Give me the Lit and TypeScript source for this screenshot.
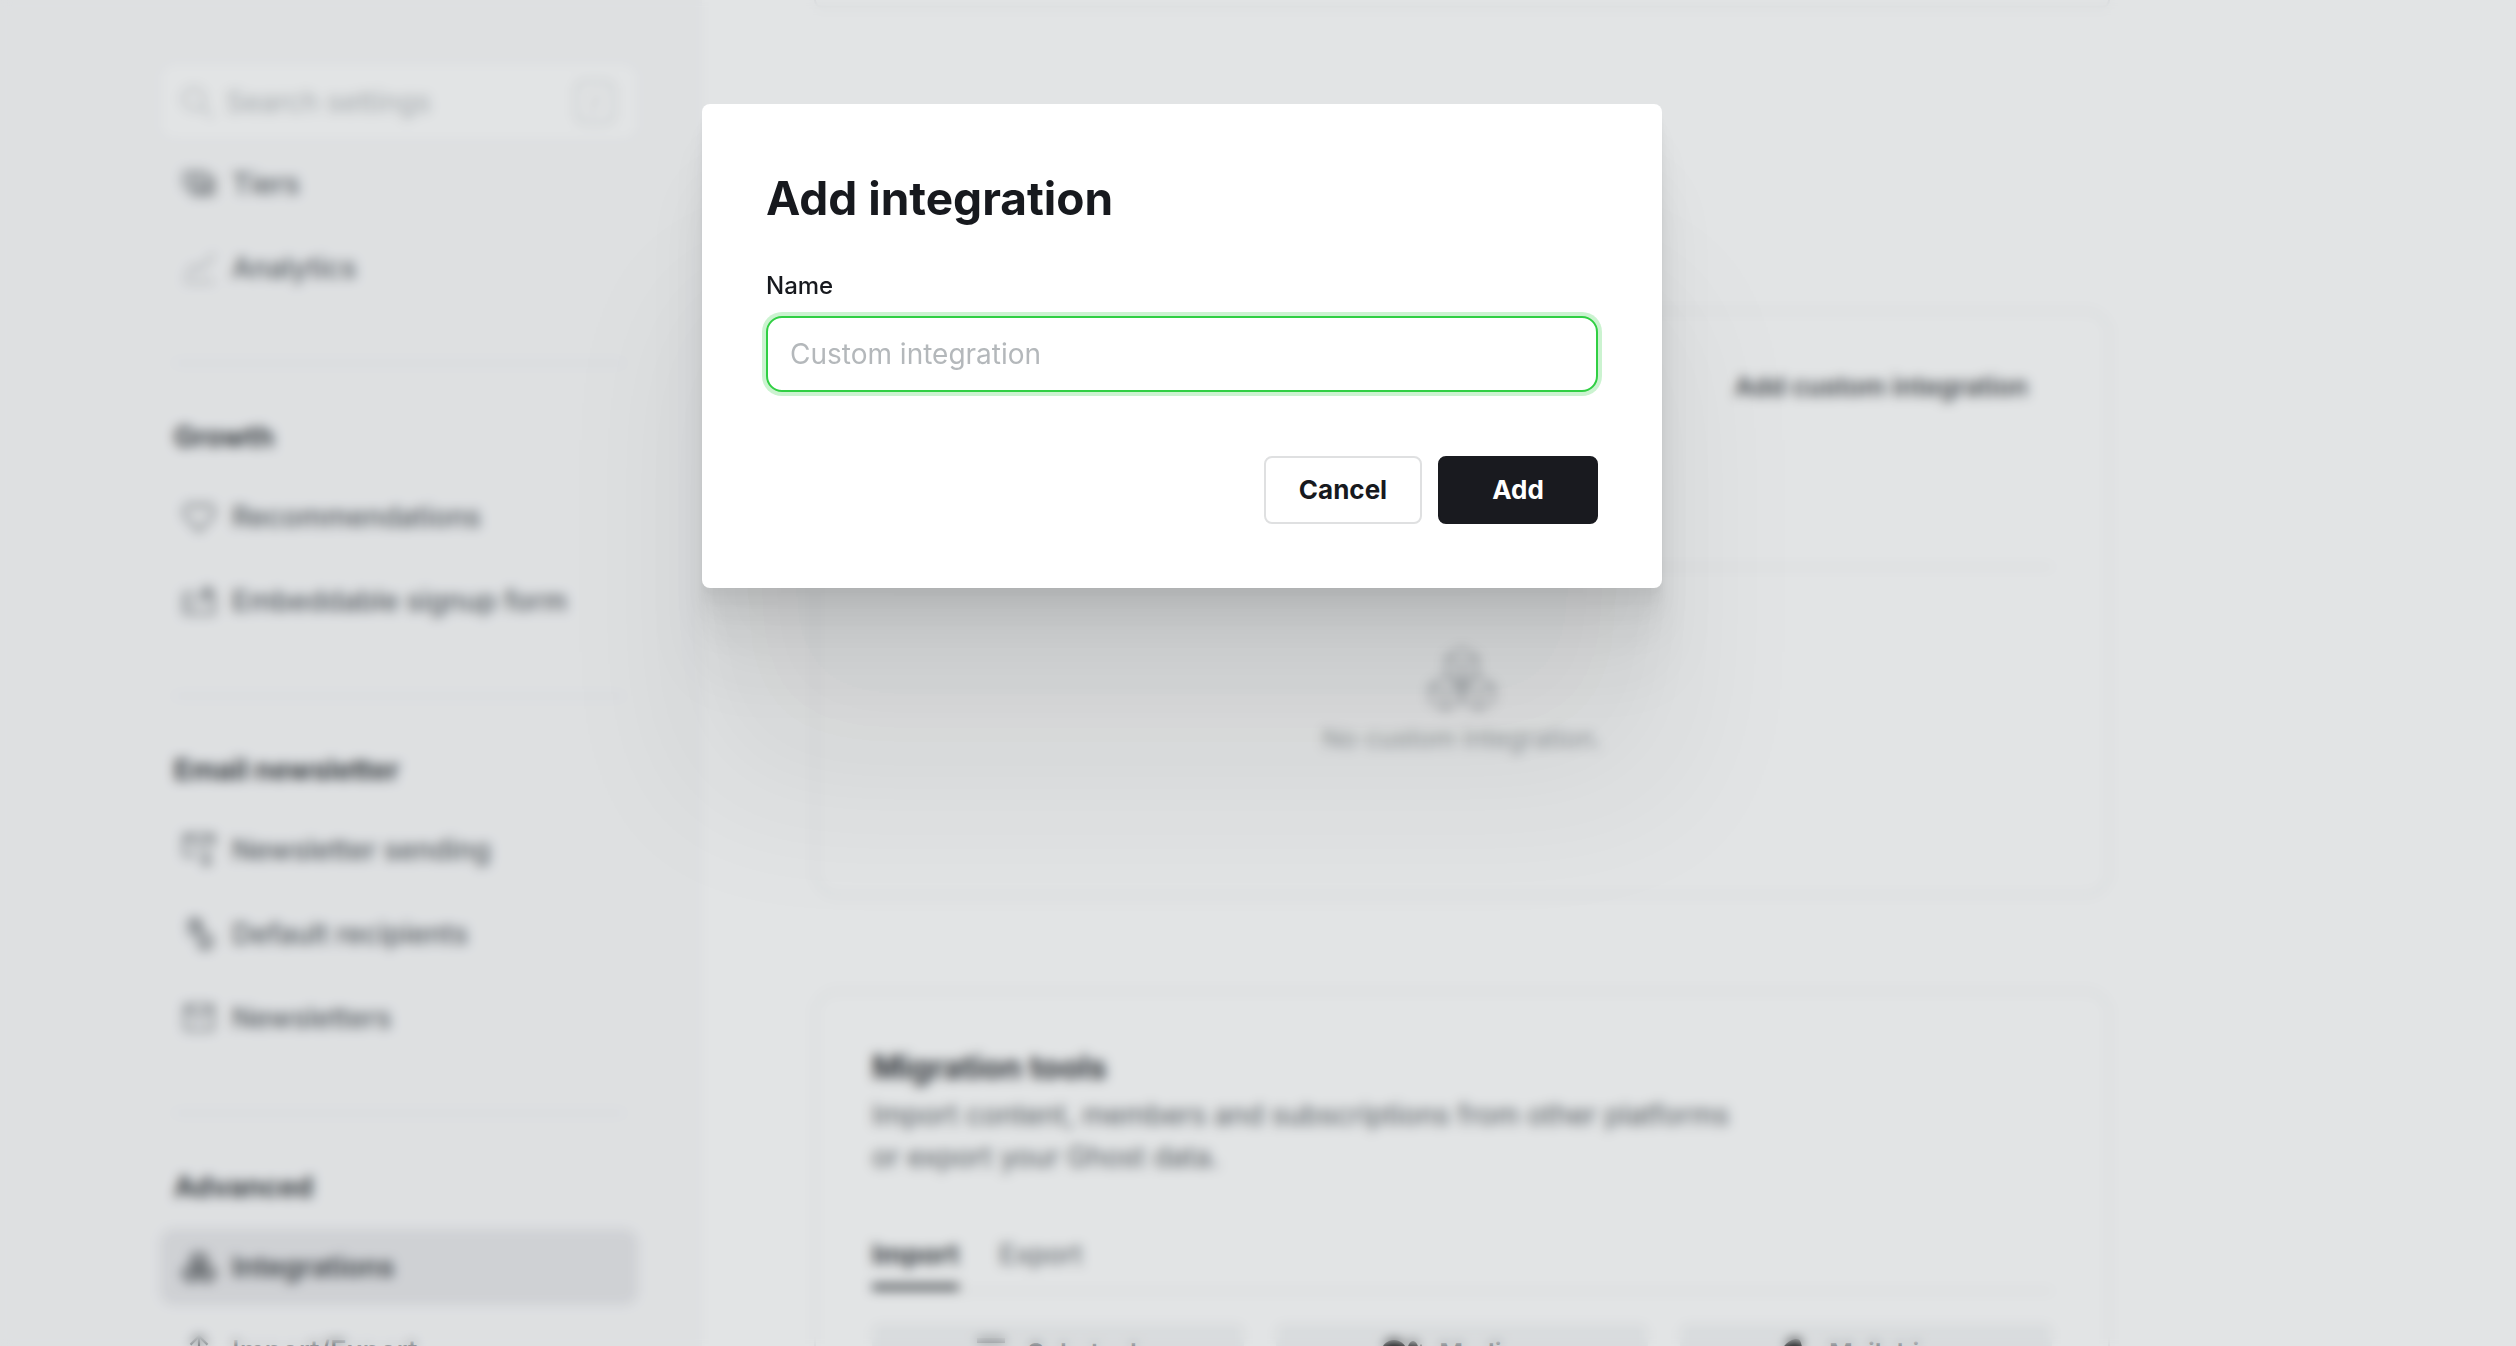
import { LitElement, html, css, svg } from "lit";
import type { SVGTemplateResult } from "lit";
import { customElement } from "lit/decorators.js";
import { classMap } from "lit/directives/class-map.js";

interface NavItem {
  icon: string;
  label: string;
  active?: boolean;
}

interface NavGroup {
  title?: string;
  items: NavItem[];
}

// Three hexagonal modules stacked in a triangle.
const modules = svg`
  <path d="M16 2l7 4v7l-7 4-7-4V6zM8.500 15l7 4v7l-7 4-7-4v-7zM23.500 15l7 4v7l-7 4-7-4v-7z" />
  <path d="M9 6l7 4 7-4M16 10v7M1.500 19l7 4 7-4M8.500 23v7M16.500 19l7 4 7-4M23.500 23v7" />`;

const icons: Record<string, SVGTemplateResult> = {
  search: svg`<circle cx="13" cy="13" r="10" /><path d="M20.500 20.500L30 30" />`,
  tiers: svg`
    <rect x="2" y="5" width="21" height="14" rx="2" />
    <path d="M8 10h9M8 14h9M23 10h5a2 2 0 0 1 2 2v12a2 2 0 0 1-2 2H11a2 2 0 0 1-2-2v-5M14 22h11M26 14v8" />`,
  analytics: svg`<path stroke-width="1" d="M2 29h28M3 24l8-10 7 3L30 3" />`,
  heart: svg`<path d="M16 29L4 16.500a7.500 7.500 0 0 1 0-10.500 7.500 7.500 0 0 1 10.500 0L16 7.500 17.500 6A7.500 7.500 0 0 1 28 6a7.500 7.500 0 0 1 0 10.500z" />`,
  embed: svg`
    <path d="M12 9H4a2 2 0 0 0-2 2v15a2 2 0 0 0 2 2h24a2 2 0 0 0 2-2V11a2 2 0 0 0-2-2M7 15v7M12 19v3" />
    <path d="M18 18v-5c0-3 1-5 4-7M22 2l6 5-6 5v-3M23 16h4M19 7h8" />`,
  sending: svg`
    <path d="M14 21H4a2 2 0 0 1-2-2V4a2 2 0 0 1 2-2h24a2 2 0 0 1 2 2v9" />
    <path d="M3 3l13 9L29 3M23 17v13M18 25l5 5 5-5M20 17h6" />`,
  recipients: svg`
    <circle cx="12" cy="8" r="6" /><path d="M6 18c2-3 4-4 8-4s7 2 8 4M7 6h11M15 4v8" />
    <circle cx="22" cy="23" r="7" /><path d="M19 23l2 2 4-5M19 28h6" />`,
  mail: svg`<rect x="3" y="4" width="26" height="23" rx="2" /><path d="M4 6l12 10L28 6" />`,
  modules,
  transfer: svg`<path d="M16 2v20M8 10l8-8 8 8M3 22v6h26v-6" />`,
};

const icon = (name: string) => html`
  <svg class="icon" viewBox="0 0 32 32" aria-hidden="true">${icons[name]}</svg>
`;

const groups: NavGroup[] = [
  {
    items: [
      { icon: "tiers", label: "Tiers" },
      { icon: "analytics", label: "Analytics" },
    ],
  },
  {
    title: "Growth",
    items: [
      { icon: "heart", label: "Recommendations" },
      { icon: "embed", label: "Embeddable signup form" },
    ],
  },
  {
    title: "Email newsletter",
    items: [
      { icon: "sending", label: "Newsletter sending" },
      { icon: "recipients", label: "Default recipients" },
      { icon: "mail", label: "Newsletters" },
    ],
  },
  {
    title: "Advanced",
    items: [
      { icon: "modules", label: "Integrations", active: true },
      { icon: "transfer", label: "Import/Export" },
    ],
  },
];

@customElement("settings-sidebar")
export class SettingsSidebar extends LitElement {
  static styles = css`
    :host {
      display: block;
      box-sizing: border-box;
      padding: 64px 64px 0 160px;
      background: #fafafb;
      color: #54595e;
      font-size: 28px;
      line-height: 32px;
    }
    .icon {
      width: 34px;
      height: 34px;
      flex: none;
      fill: none;
      stroke: currentColor;
      stroke-width: 2;
    }
    .search {
      display: flex;
      align-items: center;
      gap: 12px;
      box-sizing: border-box;
      height: 76px;
      margin-bottom: 6px;
      padding: 0 24px 0 20px;
      border-radius: 16px;
      background: #fff;
      box-shadow: 0 2px 4px rgba(0, 0, 0, 0.02);
      color: #bfc2c5;
    }
    .query {
      flex: 1;
      min-width: 0;
      border: 0;
      padding: 0;
      background: none;
      font: inherit;
      outline: none;
    }
    .query::placeholder {
      color: #b4b8bb;
      opacity: 1;
    }
    .key {
      box-sizing: border-box;
      width: 38px;
      border: 2px solid #ced1d4;
      border-radius: 8px;
      font-family: inherit;
      font-size: 22px;
      line-height: 38px;
      text-align: center;
    }
    .list {
      display: flex;
      flex-direction: column;
      gap: 8px;
      margin: 0;
      padding: 0;
      list-style: none;
    }
    .group + .group::before {
      content: "";
      display: block;
      margin: 56px 14px 57px;
      border-top: 2px solid #ebecee;
    }
    .title {
      margin: 0 14px 26px;
      color: #303438;
      font-size: 28px;
      font-weight: 700;
      line-height: 32px;
    }
    .link {
      display: flex;
      align-items: center;
      gap: 16px;
      height: 76px;
      padding: 0 22px;
      border-radius: 14px;
      color: inherit;
      font-weight: 500;
      text-decoration: none;
      white-space: nowrap;
    }
    .active {
      background: #e8e8eb;
      color: #34383c;
      font-weight: 600;
    }
  `;

  render() {
    return html`
      <label class="search">
        ${icon("search")}
        <input class="query" type="search" placeholder="Search settings" aria-label="Search settings" />
        <kbd class="key">/</kbd>
      </label>
      <nav>
        ${groups.map(
          (group) => html`
            <section class="group">
              ${group.title ? html`<h2 class="title">${group.title}</h2>` : null}
              <ul class="list">
                ${group.items.map(
                  (item) => html`
                    <li>
                      <a class=${classMap({ link: true, active: !!item.active })} href="#">
                        ${icon(item.icon)}<span>${item.label}</span>
                      </a>
                    </li>
                  `,
                )}
              </ul>
            </section>
          `,
        )}
      </nav>
    `;
  }
}

@customElement("settings-content")
export class SettingsContent extends LitElement {
  static styles = css`
    :host {
      display: flex;
      flex-direction: column;
      box-sizing: border-box;
      padding: 0 406px 0 112px;
      background: #fff;
      color: #54595e;
      font-size: 28px;
      line-height: 42px;
    }
    .card {
      box-sizing: border-box;
      padding: 48px 56px 56px;
      border: 2px solid #edeeef;
      border-radius: 24px;
    }
    .above {
      height: 8px;
      padding: 0;
      margin-bottom: 302px;
      border-top: 0;
      border-radius: 0 0 24px 24px;
    }
    .integrations {
      height: 586px;
      margin-bottom: 94px;
      padding-top: 44px;
    }
    .bar {
      display: flex;
      justify-content: flex-end;
      height: 210px;
      border-bottom: 2px solid #edeeef;
    }
    .add {
      align-self: flex-start;
      height: 62px;
      padding: 0 24px;
      border: 0;
      background: none;
      color: #3d4145;
      font: inherit;
      font-size: 26px;
      font-weight: 600;
    }
    .empty {
      display: flex;
      flex-direction: column;
      align-items: center;
      gap: 4px;
      padding-top: 76px;
      color: #9a9ea2;
    }
    .art {
      width: 70px;
      height: 70px;
      fill: none;
      stroke: #95999d;
      stroke-width: 1;
    }
    .note {
      margin: 0;
      font-size: 26px;
    }
    .title {
      margin: 8px 0 6px;
      color: #282b2f;
      font-size: 32px;
      font-weight: 700;
      line-height: 40px;
    }
    .text {
      max-width: 880px;
      margin: 0 0 52px;
    }
    .tabs {
      display: flex;
      gap: 40px;
      margin-bottom: 32px;
      border-bottom: 2px solid #edeeef;
    }
    .tab {
      height: 60px;
      padding: 0 0 4px;
      border: 0;
      border-bottom: 6px solid transparent;
      background: none;
      color: #54595e;
      font: inherit;
      font-size: 27px;
    }
    .current {
      border-color: #3d4145;
      color: #303438;
      font-weight: 700;
    }
    .tiles {
      display: grid;
      grid-template-columns: repeat(3, 1fr);
      gap: 32px;
    }
    .tile {
      display: flex;
      align-items: center;
      justify-content: center;
      gap: 16px;
      height: 64px;
      padding: 0 0 6px;
      border: 0;
      border-radius: 8px;
      background: #f4f5f6;
      color: #54595e;
      font: inherit;
      font-size: 26px;
      font-weight: 600;
    }
    .logo {
      width: 40px;
      height: 40px;
    }
  `;

  render() {
    return html`
      <div class="card above"></div>
      <section class="card integrations">
        <div class="bar"><button class="add" type="button">Add custom integration</button></div>
        <div class="empty">
          <svg class="art" viewBox="0 0 32 32" aria-hidden="true">${modules}</svg>
          <p class="note">No custom integration.</p>
        </div>
      </section>
      <section class="card">
        <h2 class="title">Migration tools</h2>
        <p class="text">
          Import content, members and subscriptions from other platforms or export your Ghost data.
        </p>
        <div class="tabs" role="tablist">
          <button class="tab current" type="button" role="tab" aria-selected="true">Import</button>
          <button class="tab" type="button" role="tab" aria-selected="false">Export</button>
        </div>
        <div class="tiles">
          <button class="tile" type="button">
            <svg class="logo" viewBox="0 0 40 40" aria-hidden="true">
              <path fill="#8f9295" d="M6 5h28v5H6zM6 13h28v5H6zM6 21h28v18l-14-8-14 8z" />
            </svg>
            Substack
          </button>
          <button class="tile" type="button">
            <svg class="logo" viewBox="0 0 40 40" aria-hidden="true">
              <circle cx="11" cy="20" r="13" />
              <ellipse cx="30" cy="20" rx="6" ry="12" />
              <ellipse cx="38" cy="20" rx="1" ry="9" />
            </svg>
            Medium
          </button>
          <button class="tile" type="button">
            <svg class="logo" viewBox="0 0 40 40" aria-hidden="true">
              <path d="M5 26c1-8 8-18 17-20 8-1 5 7 9 12 5 6 5 12-1 17-6 6-17 5-21-3-3 0-5-3-4-6z" />
            </svg>
            Mailchimp
          </button>
        </div>
      </section>
    `;
  }
}

@customElement("integration-dialog")
export class IntegrationDialog extends LitElement {
  static styles = css`
    :host {
      display: block;
      width: 960px;
      max-width: 100%;
    }
    .panel {
      display: flex;
      flex-direction: column;
      box-sizing: border-box;
      padding: 64px;
      border-radius: 8px;
      background: #fff;
      color: #17191e;
      box-shadow:
        0 6px 4px rgba(0, 0, 0, 0.02),
        0 14px 10px rgba(0, 0, 0, 0.028),
        0 25px 20px rgba(0, 0, 0, 0.035),
        0 44px 36px rgba(0, 0, 0, 0.042),
        0 84px 66px rgba(0, 0, 0, 0.05),
        0 200px 160px rgba(0, 0, 0, 0.07);
    }
    .title {
      margin: 0 0 40px;
      font-size: 46px;
      font-weight: 700;
      line-height: 60px;
    }
    .label {
      margin-bottom: 12px;
      font-size: 24px;
      font-weight: 500;
      line-height: 36px;
    }
    .field {
      box-sizing: border-box;
      width: 100%;
      height: 76px;
      padding: 0 22px;
      border: 2px solid #30cf43;
      border-radius: 16px;
      outline: none;
      background: #fff;
      box-shadow: 0 0 0 4px rgba(48, 207, 67, 0.25);
      color: inherit;
      font: inherit;
      font-size: 28px;
    }
    .field::placeholder {
      color: #b4b8bb;
      opacity: 1;
    }
    .actions {
      display: flex;
      justify-content: flex-end;
      gap: 16px;
      margin-top: 64px;
    }
    .button {
      box-sizing: border-box;
      height: 68px;
      min-width: 158px;
      padding: 0 24px 2px;
      border: 2px solid #dfe0e1;
      border-radius: 8px;
      background: #fff;
      color: inherit;
      font: inherit;
      font-size: 26px;
      font-weight: 700;
    }
    .primary {
      min-width: 160px;
      border-color: #191a1f;
      background: #191a1f;
      color: #fff;
    }
  `;

  render() {
    return html`
      <form class="panel" role="dialog" aria-labelledby="title">
        <h1 class="title" id="title">Add integration</h1>
        <label class="label" for="name">Name</label>
        <input class="field" id="name" type="text" placeholder="Custom integration" />
        <div class="actions">
          <button class="button" type="button">Cancel</button>
          <button class="button primary" type="button">Add</button>
        </div>
      </form>
    `;
  }
}

@customElement("app-root")
export class AppRoot extends LitElement {
  static styles = css`
    :host {
      display: block;
      position: relative;
      height: 100vh;
      overflow: hidden;
      font-family: Inter, "Liberation Sans", sans-serif;
    }
    .page {
      display: grid;
      grid-template-columns: 702px 1fr;
      height: 100%;
      overflow: hidden;
    }
    .overlay {
      position: absolute;
      inset: 0;
      display: flex;
      align-items: flex-start;
      justify-content: center;
      padding: 104px 152px 0 0;
      background: rgba(94, 105, 112, 0.18);
      backdrop-filter: blur(6px);
    }
  `;

  render() {
    return html`
      <div class="page">
        <settings-sidebar></settings-sidebar>
        <settings-content></settings-content>
      </div>
      <div class="overlay"><integration-dialog></integration-dialog></div>
    `;
  }
}
